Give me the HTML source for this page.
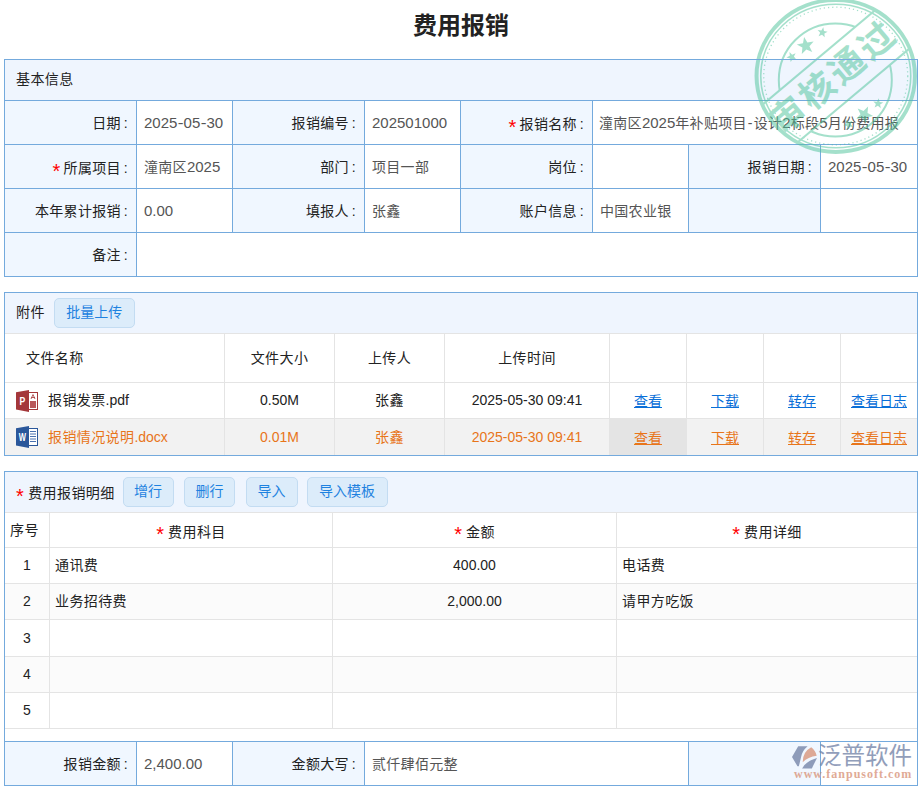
<!DOCTYPE html>
<html lang="zh-CN">
<head>
<meta charset="utf-8">
<title>费用报销</title>
<style>
*{box-sizing:border-box;margin:0;padding:0}
html,body{width:922px;height:790px;overflow:hidden;background:#fff}
body{position:relative;font-family:"Liberation Sans","Noto Sans CJK SC",sans-serif;font-size:14px;color:#222}
.cj{font-family:"Liberation Sans","Noto Sans CJK SC",sans-serif;position:relative;top:0;letter-spacing:.4px}
h1{position:absolute;left:0;top:9px;width:922px;text-align:center;font-size:24px;line-height:34px;font-weight:bold;color:#222;font-family:"Liberation Sans","Noto Sans CJK SC",sans-serif}
.sec{position:absolute;left:4px;width:914px;border:1px solid #74aadd;z-index:5;pointer-events:none}
.hd{background:#eff5fe;padding-left:11px;font-family:"Liberation Sans","Noto Sans CJK SC",sans-serif;font-size:14px;color:#222;display:flex;align-items:center}
table{border-collapse:collapse;table-layout:fixed}
/* basic info */
.info{position:absolute;left:4px;width:913px}
.info td{letter-spacing:.3px;border:1px solid #74aadd;height:44px;font-family:"Liberation Sans","Noto Sans CJK SC",sans-serif;font-size:14px;white-space:nowrap;overflow:hidden;padding-bottom:1px}
.info td.l{background:#f0f7ff;text-align:right;padding-right:8px;color:#222}
.info td.v{background:#fff;text-align:left;padding-left:7px;color:#555}
.info .req{top:5.5px;margin-right:3px;margin-left:1px}
.n{font-size:15px;letter-spacing:0}
.hy{margin:0 1px}
i{font-style:normal;margin-left:3px}
u{text-decoration:none;margin:0 .6px;display:inline-block;transform:scaleX(1.15)}
.req{color:#f00;font-family:"Liberation Sans",sans-serif;font-weight:normal;font-size:20px;line-height:1;margin-right:4px;position:relative;top:5px}
.t{position:relative;top:-2px;letter-spacing:.4px}
.btn{display:inline-block;height:30px;line-height:26px;text-align:center;border:1px solid #c3dcf2;background:#dcecfa;border-radius:5px;color:#1e82e0;font-size:14px;padding:0;width:51px;margin-left:10px;font-family:"Liberation Sans","Noto Sans CJK SC",sans-serif}
/* attachments */
.att{position:absolute;left:4px;top:333px;width:913px}
.att td{border:1px solid #e4e4e4;padding-bottom:1px;line-height:20px;text-align:center;font-size:14px;color:#222;white-space:nowrap}
.att tr.h td{padding-top:1px;padding-bottom:0;height:49px;font-family:"Liberation Sans","Noto Sans CJK SC",sans-serif}
.att tr.h .cj{top:-1px}
.att a{color:#0a6fd8;text-decoration:underline;font-family:"Liberation Sans","Noto Sans CJK SC",sans-serif}
.att tr.sel td{background:#f2f2f2;color:#e8751a}
.att tr.sel a{color:#e8751a}
.att tr.sel .cj{top:0}
.att a .cj,.att tr.sel a .cj{top:0;letter-spacing:0}
.att a{position:relative;top:1px}
.att td.fn{text-align:left;padding-left:43px;position:relative}
.ico{position:absolute;left:11px;top:7px;width:22px;height:22px}
/* detail */
.det{position:absolute;left:4px;top:512px;width:913px}
.det td{border:1px solid #e4e4e4;padding-bottom:1px;line-height:20px;height:36px;font-size:14px;color:#222;white-space:nowrap}
.det tr.h td{height:35px;text-align:center;font-family:"Liberation Sans","Noto Sans CJK SC",sans-serif}
.det tr:nth-child(odd) td{background:#fbfbfb}
.det tr.h td{background:#fff}
.det tr.h .cj{top:1.5px}
.det tr.h td:first-child{padding-right:5px}
.det tr.h td:first-child .cj{top:0}
</style>
</head>
<body>
<h1>费用报销</h1>

<!-- Section 1 -->
<div class="sec" style="top:59px;height:218px"></div>
<div class="hd" style="position:absolute;left:5px;top:60px;width:912px;height:40px"><span class="t">基本信息</span></div>
<table class="info" style="top:100px">
<colgroup><col style="width:132px"><col style="width:96px"><col style="width:132px"><col style="width:96px"><col style="width:132px"><col style="width:96px"><col style="width:132px"><col style="width:97px"></colgroup>
<tr><td class="l">日期<i>:</i></td><td class="v"><span class="n">2025<u>-</u>05<u>-</u>30</span></td><td class="l">报销编号<i>:</i></td><td class="v"><span class="n">202501000</span></td><td class="l"><span class="req">*</span>报销名称<i>:</i></td><td class="v" colspan="3" style="padding-left:6px">潼南区<span class="n">2025</span>年补贴项目<span class="hy">-</span>设计<span class="n">2</span>标段<span class="n">5</span>月份费用报</td></tr>
<tr><td class="l"><span class="req">*</span>所属项目<i>:</i></td><td class="v">潼南区<span class="n">2025</span></td><td class="l">部门<i>:</i></td><td class="v">项目一部</td><td class="l">岗位<i>:</i></td><td class="v"></td><td class="l">报销日期<i>:</i></td><td class="v"><span class="n">2025<u>-</u>05<u>-</u>30</span></td></tr>
<tr><td class="l">本年累计报销<i>:</i></td><td class="v"><span class="n">0.00</span></td><td class="l">填报人<i>:</i></td><td class="v">张鑫</td><td class="l">账户信息<i>:</i></td><td class="v">中国农业银</td><td class="l"></td><td class="v"></td></tr>
<tr><td class="l">备注<i>:</i></td><td class="v" colspan="7"></td></tr>
</table>

<!-- Section 2 -->
<div class="sec" style="top:292px;height:164px"></div>
<div class="hd" style="position:absolute;left:5px;top:293px;width:912px;height:40px"><span class="t">附件</span><span class="btn" style="margin-left:9px;width:81px">批量上传</span></div>
<table class="att">
<colgroup><col style="width:220px"><col style="width:110px"><col style="width:110px"><col style="width:165px"><col style="width:77px"><col style="width:77px"><col style="width:77px"><col style="width:77px"></colgroup>
<tr class="h"><td style="text-align:left;padding-left:21px"><span class="cj">文件名称</span></td><td><span class="cj">文件大小</span></td><td><span class="cj">上传人</span></td><td><span class="cj">上传时间</span></td><td></td><td></td><td></td><td></td></tr>
<tr style="height:36px"><td class="fn"><svg class="ico" viewBox="0 0 22 22"><rect x="12.5" y="2.5" width="9" height="17" fill="#fff" stroke="#a4373a" stroke-width="1"/><rect x="14" y="11" width="6" height="7" fill="#b9575a"/><path d="M15,9 L17,4.5 L19,9 M15.2,7.5 H19" stroke="#a4373a" stroke-width=".8" fill="none"/><polygon points="0,2.2 13,0 13,22 0,19.4" fill="#a4373a"/><text x="0" y="14.8" text-anchor="middle" transform="translate(6.4 0) scale(.8 1)" font-family="'Liberation Sans',sans-serif" font-weight="bold" font-size="10.8" fill="#fff">P</text></svg><span class="cj">报销发票</span>.pdf</td><td>0.50M</td><td><span class="cj">张鑫</span></td><td>2025-05-30 09:41</td><td><a><span class="cj">查看</span></a></td><td><a><span class="cj">下载</span></a></td><td><a><span class="cj">转存</span></a></td><td><a><span class="cj">查看日志</span></a></td></tr>
<tr class="sel" style="height:37px"><td class="fn"><svg class="ico" viewBox="0 0 22 22"><rect x="12.5" y="2.5" width="9" height="17" fill="#fff" stroke="#2b579a" stroke-width="1"/><path d="M14,5.5H20M14,8H20M14,10.5H20M14,13H20M14,15.5H20" stroke="#4a72b0" stroke-width="1"/><polygon points="0,2.2 13,0 13,22 0,19.4" fill="#2b579a"/><text x="0" y="14.8" text-anchor="middle" transform="translate(6.3 0) scale(.75 1)" font-family="'Liberation Sans',sans-serif" font-weight="bold" font-size="10.2" fill="#fff">W</text></svg><span class="cj">报销情况说明</span>.docx</td><td>0.01M</td><td><span class="cj">张鑫</span></td><td>2025-05-30 09:41</td><td style="background:#e4e4e4"><a><span class="cj">查看</span></a></td><td><a><span class="cj">下载</span></a></td><td><a><span class="cj">转存</span></a></td><td><a><span class="cj">查看日志</span></a></td></tr>
</table>

<!-- Section 3 -->
<div class="sec" style="top:471px;height:315px"></div>
<div class="hd" style="position:absolute;left:5px;top:472px;width:912px;height:40px"><span class="t" style="top:-1px"><span class="req">*</span>费用报销明细</span><span class="btn" style="margin-left:8px">增行</span><span class="btn" style="margin-left:10.5px">删行</span><span class="btn" style="margin-left:10.5px;width:52px">导入</span><span class="btn" style="width:81px;margin-left:9px">导入模板</span></div>
<table class="det">
<colgroup><col style="width:45px"><col style="width:283px"><col style="width:284px"><col style="width:301px"></colgroup>
<tr class="h"><td><span class="cj">序号</span></td><td><span class="req">*</span><span class="cj">费用科目</span></td><td><span class="req">*</span><span class="cj">金额</span></td><td><span class="req">*</span><span class="cj">费用详细</span></td></tr>
<tr><td style="text-align:center">1</td><td style="padding-left:5px"><span class="cj">通讯费</span></td><td style="text-align:center">400.00</td><td style="padding-left:5px"><span class="cj">电话费</span></td></tr>
<tr><td style="text-align:center">2</td><td style="padding-left:5px"><span class="cj">业务招待费</span></td><td style="text-align:center">2,000.00</td><td style="padding-left:5px"><span class="cj">请甲方吃饭</span></td></tr>
<tr style="height:37px"><td style="text-align:center">3</td><td></td><td></td><td></td></tr>
<tr><td style="text-align:center">4</td><td></td><td></td><td></td></tr>
<tr><td style="text-align:center">5</td><td></td><td></td><td></td></tr>
</table>
<table class="info" style="top:741px">
<colgroup><col style="width:132px"><col style="width:96px"><col style="width:132px"><col style="width:96px"><col style="width:132px"><col style="width:96px"><col style="width:132px"><col style="width:97px"></colgroup>
<tr><td class="l">报销金额<i>:</i></td><td class="v"><span class="n">2,400.00</span></td><td class="l">金额大写<i>:</i></td><td class="v" colspan="3">贰仟肆佰元整</td><td class="l"></td><td class="v"></td></tr>
</table>

<!-- stamp -->
<svg class="stamp" style="position:absolute;left:750px;top:0" width="172" height="166" viewBox="750 0 172 166">
<defs><clipPath id="cpo"><path d="M-100,-100H100V100H-100Z M-100,-25.7 H100 V25.7 H-100Z" clip-rule="evenodd" transform="translate(835.5 77) rotate(-40)"/></clipPath>
<clipPath id="cpr"><ellipse cx="835.75" cy="76" rx="79" ry="75.8"/></clipPath></defs>
<g opacity="0.52" fill="none" stroke="#52c59d">
<ellipse cx="835.75" cy="76" rx="79.2" ry="75.9" stroke-width="4"/>
<ellipse cx="835.75" cy="76" rx="75" ry="71.8" stroke-width="1.6"/>
<ellipse cx="835.75" cy="76" rx="72" ry="68.8" stroke-width="1.3" stroke-dasharray="1.2 3"/>
<g clip-path="url(#cpo)"><circle cx="835.3" cy="80" r="56.5" stroke-width="2"/></g>
<g clip-path="url(#cpr)"><g transform="translate(835.5 77) rotate(-40)">
<line x1="-90" y1="-25.7" x2="90" y2="-25.7" stroke-width="2"/>
<line x1="-90" y1="25.7" x2="90" y2="25.7" stroke-width="2"/>
</g></g>
<g transform="translate(835.5 77) rotate(-40)">
<text x="-1.5" y="11" text-anchor="middle" font-family="'Liberation Sans','Noto Sans CJK SC',sans-serif" font-weight="bold" font-size="35" letter-spacing="3.5" fill="#52c59d" stroke="none">审核通过</text>
</g>
<g fill="#52c59d" stroke="none"><polygon points="804.1,36.9 807.4,42.4 813.6,41.6 809.4,46.3 812.2,52.1 806.4,49.5 801.8,53.9 802.4,47.6 796.8,44.5 803.0,43.2"/><polygon points="823.3,27.3 824.0,31.0 827.6,31.8 824.4,33.5 824.7,37.3 822.0,34.7 818.6,36.2 820.2,32.8 817.7,30.0 821.4,30.5"/><polygon points="789.5,52.1 792.1,54.7 795.6,53.3 793.9,56.6 796.3,59.5 792.6,58.9 790.7,62.1 790.1,58.4 786.4,57.5 789.8,55.8"/><polygon points="865.8,123.6 862.5,118.1 856.3,118.9 860.5,114.2 857.7,108.4 863.5,111.0 868.1,106.6 867.5,112.9 873.1,116.0 866.9,117.3"/><polygon points="880.8,108.2 877.9,105.8 874.6,107.5 875.9,104.1 873.3,101.4 877.0,101.7 878.7,98.3 879.6,101.9 883.3,102.5 880.1,104.5"/><polygon points="847.6,129.7 846.9,126.0 843.3,125.2 846.5,123.5 846.2,119.7 848.9,122.3 852.3,120.8 850.7,124.2 853.2,127.0 849.5,126.5"/></g>
</g>
</svg>

<!-- logo -->
<div class="logo" style="position:absolute;left:792px;top:744px;width:126px;height:40px;opacity:.8">
<svg style="position:absolute;left:0;top:2px" width="26" height="23" viewBox="0 0 26 23">
<path d="M6.2,0.3 L15.6,0.3 Q10,5 9.1,11.1 Q8,16 6.8,20.2 L5.5,20.2 L0,11.1 Z" fill="#7686aa"/>
<path d="M19.2,1.3 Q23.5,4.5 24.7,9.8 Q16,11 10.7,16.3 Q10.5,6 19.2,1.3 Z" fill="#d9967c"/>
<path d="M25,12 L19.8,22.4 L10.1,22.4 Q14,15 25,12 Z" fill="#7686aa"/>
</svg>
<span style="position:absolute;left:26px;top:-5.5px;font-family:'Liberation Sans','Noto Sans CJK SC',sans-serif;font-size:23.5px;line-height:34px;color:#7686aa;white-space:nowrap">泛普软件</span>
<span style="position:absolute;left:2px;top:23px;font-family:'Liberation Serif','DejaVu Serif',serif;font-weight:bold;font-size:12px;line-height:14px;letter-spacing:1px;color:#d9967c;white-space:nowrap">www.fanpusoft.com</span>
</div>
</body>
</html>
